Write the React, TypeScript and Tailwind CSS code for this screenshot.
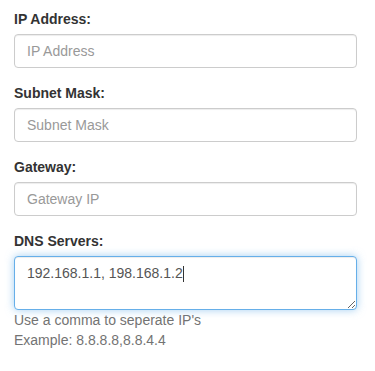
const inputClass =
  "block h-[34px] w-[343px] rounded-[4px] border border-[#cccccc] bg-white px-3 py-1.5 text-[14px] leading-5 text-[#555555] shadow-[inset_0_1px_1px_rgba(0,0,0,0.075)] outline-none placeholder:text-[#999999]";

const FIELDS = [
  { label: "IP Address:", placeholder: "IP Address" },
  { label: "Subnet Mask:", placeholder: "Subnet Mask" },
  { label: "Gateway:", placeholder: "Gateway IP" },
];

export default function App() {
  return (
    <div className="min-h-[371px] w-[375px] bg-white px-[14px] pt-[9px] font-['Liberation_Sans',Arial,sans-serif] text-[14px] leading-5 text-[#333333]">
      {FIELDS.map((field) => (
        <div key={field.label} className="mb-[15px]">
          <label className="mb-[5px] block font-bold">{field.label}</label>
          <input type="text" placeholder={field.placeholder} className={inputClass} />
        </div>
      ))}

      <div>
        <label className="mb-[5px] block font-bold">DNS Servers:</label>
        <div className="relative w-[343px]">
          <textarea
            rows={2}
            defaultValue="192.168.1.1, 198.168.1.2"
            className="block h-[54px] w-[343px] resize-y rounded-[4px] border border-[#66afe9] bg-white px-3 py-1.5 text-[14px] leading-5 text-[#555555] caret-transparent shadow-[inset_0_1px_1px_rgba(0,0,0,0.075),0_0_8px_rgba(102,175,233,0.6)] outline-none"
          />
          {/* fake caret after the typed value */}
          <span className="pointer-events-none absolute left-[169px] top-[10px] h-[16px] w-px bg-[#333333]" />
        </div>
        <p className="text-[#737373]">Use a comma to seperate IP's</p>
        <p className="text-[#737373]">Example: 8.8.8.8,8.8.4.4</p>
      </div>
    </div>
  );
}
